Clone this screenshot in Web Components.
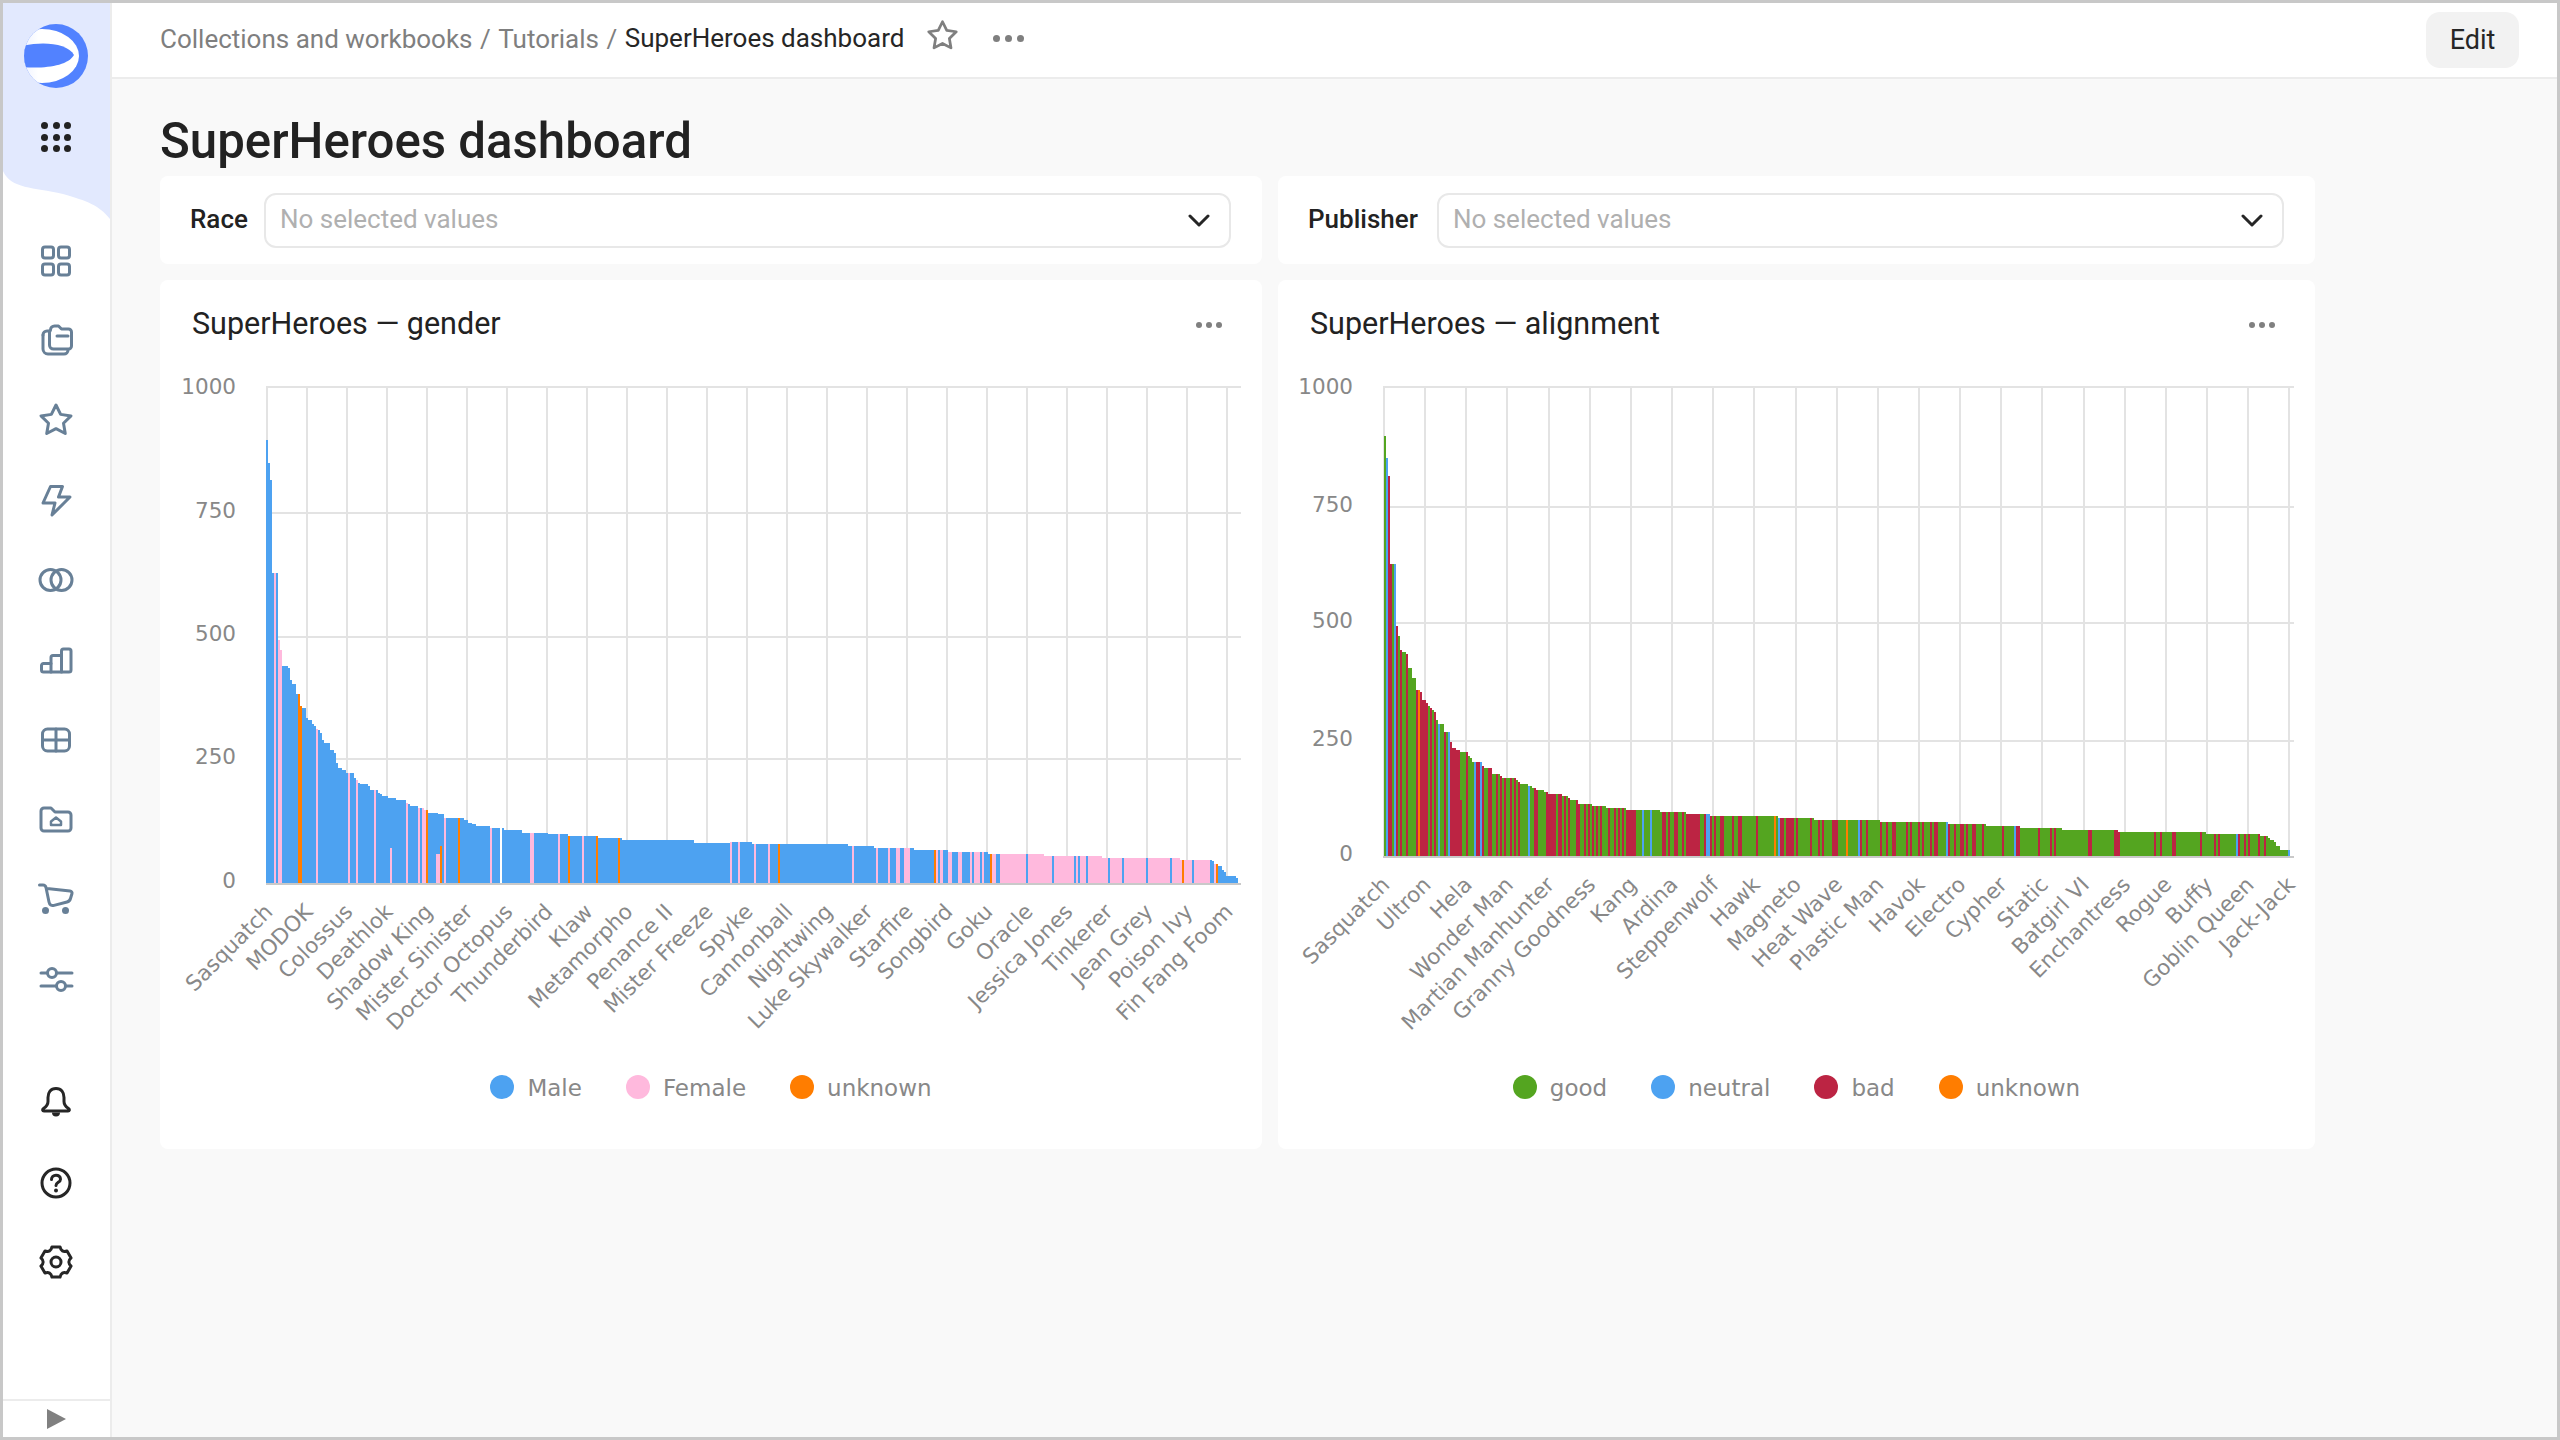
<!DOCTYPE html>
<html>
<head>
<meta charset="utf-8">
<title>SuperHeroes dashboard</title>
<style>
  html, body { margin: 0; padding: 0; background: #fff; }
  body { font-family: Roboto, "Liberation Sans", sans-serif; }
</style>
</head>
<body>
<ds-app></ds-app>
<script>
const BLUE = '#4da2f1', PINK = '#ffb9dd', ORANGE = '#ff7d00', GREEN = '#54a520', RED = '#bc2443';

// bar outlines and colour stripes traced from crops of the reference: ox/oy is the crop origin, sx/sy its scale
const CHARTS = {
  gender: {
    box: [160, 1102], left: 266, right: 1241, top: 387, axis: 883, step: 40, labelX: 236,
    grid: [513, 637, 759],
    ticks: [[1000, 394], [750, 518], [500, 641], [250, 764], [0, 888]],
    labels: ['Sasquatch', 'MODOK', 'Colossus', 'Deathlok', 'Shadow King', 'Mister Sinister', 'Doctor Octopus', 'Thunderbird', 'Klaw', 'Metamorpho', 'Penance II', 'Mister Freeze', 'Spyke', 'Cannonball', 'Nightwing', 'Luke Skywalker', 'Starfire', 'Songbird', 'Goku', 'Oracle', 'Jessica Jones', 'Tinkerer', 'Jean Grey', 'Poison Ivy', 'Fin Fang Foom'],
    legend: [['Male', BLUE], ['Female', PINK], ['unknown', ORANGE]],
    base: BLUE,
    steps: [
      { ox: 170, oy: 360, sx: 2.8, sy: 2.8, from: 270, pts: [[274,225],[280,287],[286,336],[302,595],[308,785],[314,813],[330,857],[336,863],[342,896],[353,908],[364,935],[370,969],[381,975],[386,1003],[398,1009],[403,1020],[409,1026],[414,1032],[420,1037],[426,1043],[431,1065],[448,1071],[459,1093],[465,1099],[470,1127],[481,1143],[492,1149],[515,1155],[521,1171],[526,1177],[532,1183],[554,1188],[560,1194],[582,1205],[588,1211],[594,1216],[610,1221],[633,1227],[661,1233],[666,1239],[672,1244],[694,1250],[711,1255],[722,1261],[750,1267],[767,1272],[823,1283],[834,1289],[845,1295],[857,1300],[896,1306],[936,1311],[986,1317],[1058,1323],[1114,1328],[1198,1334],[1266,1339],[1467,1345],[1568,1351]] },
      { ox: 720, oy: 700, sx: 2.8, sy: 3, pts: [[90,426],[358,432],[431,438],[543,444],[638,450],[750,456],[907,462],[1070,468],[1288,474],[1378,480],[1384,484],[1394,492],[1406,498],[1412,510],[1417,516],[1445,528],[1450,534]] }
    ],
    paint: [
      { ox: 170, sx: 2.8, color: PINK, runs: [[291,297],[302,314],[409,414],[498,504],[521,526],[571,577],[661,666],[694,700],[706,717],[767,773],[896,902],[1008,1019],[1086,1092],[1153,1159]] },
      { ox: 170, sx: 2.8, color: ORANGE, runs: [[358,369],[717,722],[806,812],[1114,1120],[1193,1198],[1254,1260]] },
      { ox: 170, sx: 2.8, color: '#fff', runs: [[925,930]] },
      { ox: 720, sx: 2.8, color: PINK, runs: [[28,34],[50,56],[95,100],[134,140],[370,376],[437,442],[470,476],[493,504],[515,532],[606,611],[617,623],[638,650],[666,678],[700,706],[711,727],[733,738],[762,773],[784,857],[862,930],[935,991],[996,1002],[1008,1025],[1030,1086],[1091,1126],[1131,1192],[1198,1260],[1265,1294],[1299,1322],[1327,1372],[1383,1388]] },
      { ox: 720, sx: 2.8, color: ORANGE, runs: [[162,167],[600,606],[756,762],[1294,1299],[1388,1394]] }
    ],
    stubs: [
      { x0: 390, x1: 392, y: 848, color: PINK },
      { x0: 436, x1: 440, y: 854, color: PINK },
      { x0: 440, x1: 442, y: 846, color: ORANGE }
    ]
  },
  alignment: {
    box: [1278, 1037], left: 1383, right: 2294, top: 387, axis: 856, step: 41.15, labelX: 1353,
    grid: [507, 623, 741],
    ticks: [[1000, 394], [750, 512], [500, 628], [250, 746], [0, 861]],
    labels: ['Sasquatch', 'Ultron', 'Hela', 'Wonder Man', 'Martian Manhunter', 'Granny Goodness', 'Kang', 'Ardina', 'Steppenwolf', 'Hawk', 'Magneto', 'Heat Wave', 'Plastic Man', 'Havok', 'Electro', 'Cypher', 'Static', 'Batgirl VI', 'Enchantress', 'Rogue', 'Buffy', 'Goblin Queen', 'Jack-Jack'],
    legend: [['good', GREEN], ['neutral', BLUE], ['bad', RED], ['unknown', ORANGE]],
    base: GREEN,
    steps: [
      { ox: 1280, oy: 360, sx: 3, sy: 2.8, from: 312, pts: [[318,213],[324,274],[330,325],[348,571],[354,745],[360,773],[366,812],[378,818],[384,823],[396,862],[408,890],[420,924],[426,930],[438,952],[444,960],[450,969],[456,975],[462,980],[468,986],[474,1008],[492,1019],[510,1042],[516,1070],[528,1086],[540,1092],[564,1098],[570,1109],[576,1115],[606,1126],[612,1137],[636,1142],[660,1159],[666,1165],[708,1170],[714,1176],[720,1182],[744,1187],[756,1193],[768,1198],[792,1204],[804,1210],[846,1215],[864,1221],[870,1227],[894,1232],[936,1243],[978,1249],[1038,1254],[1140,1260],[1218,1266],[1290,1271],[1494,1277]] },
      { ox: 1760, oy: 700, sx: 2.8, sy: 3, pts: [[50,348],[150,354],[336,360],[526,366],[632,372],[728,378],[846,384],[1002,390],[1248,396],[1400,402],[1422,408],[1428,414],[1440,420],[1445,426],[1456,438],[1484,450]] }
    ],
    paint: [
      { ox: 1280, sx: 3, color: RED, runs: [[324,336],[348,354],[360,366],[378,384],[408,414],[420,444],[450,456],[462,468],[492,498],[510,540],[558,564],[588,600],[606,612],[624,636],[648,654],[660,666],[672,678],[690,696],[702,708],[714,720],[762,774],[798,828],[834,846],[852,858],[864,870],[888,900],[912,918],[924,930],[936,942],[948,954],[960,966],[984,990],[1002,1008],[1014,1020],[1026,1032],[1038,1068],[1146,1158],[1164,1170],[1182,1194],[1206,1212],[1218,1260],[1272,1278],[1290,1296],[1302,1308],[1320,1332],[1356,1362],[1374,1386],[1428,1434]] },
      { ox: 1280, sx: 3, color: BLUE, runs: [[318,324],[342,348],[474,480],[504,510],[582,588],[600,606],[744,750],[1086,1092],[1110,1116],[1278,1290],[1494,1500]] },
      { ox: 1280, sx: 3, color: ORANGE, runs: [[414,420],[1482,1488]] },
      { ox: 1760, sx: 2.8, color: RED, runs: [[56,68],[73,96],[100,106],[140,146],[162,168],[174,180],[202,218],[280,286],[297,302],[336,342],[353,358],[370,381],[409,414],[420,426],[442,448],[454,459],[476,482],[487,498],[526,532],[543,549],[560,571],[577,582],[594,605],[622,627],[678,683],[717,728],[778,784],[812,818],[823,829],[918,930],[991,1008],[1103,1109],[1120,1126],[1154,1165],[1232,1238],[1271,1277],[1282,1288],[1338,1344],[1355,1361],[1366,1372],[1394,1400],[1411,1417]] },
      { ox: 1760, sx: 2.8, color: BLUE, runs: [[50,56],[274,280],[521,526],[711,717],[1333,1338],[1478,1484]] },
      { ox: 1760, sx: 2.8, color: ORANGE, runs: [[40,46],[241,246]] }
    ],
    stubs: [{ x0: 1460, x1: 1462, y: 800, color: RED }]
  }
};

function gearPath() {
  const pt = (deg, r) => {
    const a = deg * Math.PI / 180;
    return (18 + r * Math.cos(a)).toFixed(2) + ' ' + (18 + r * Math.sin(a)).toFixed(2);
  };
  let d = '';
  for (let i = 0; i < 6; i++) {
    const a = -90 + i * 60;
    d += (i ? 'L' : 'M') + pt(a - 15, 15.6) + 'L' + pt(a + 15, 15.6) + 'Q' + pt(a + 30, 10.6) + ' ' + pt(a + 45, 15.6);
  }
  return d + 'Z';
}

const ICONS = {
  dashboards: '<rect x="4.5" y="4" width="11" height="11" rx="2.5"/><rect x="20.5" y="4" width="11" height="11" rx="2.5"/><rect x="4.5" y="21" width="11" height="11" rx="2.5"/><rect x="20.5" y="21" width="11" height="11" rx="2.5"/>',
  collections: '<g transform="translate(0 -2)"><path d="M12.500 9a4 4 0 0 1 4-4h4l3 3h7a3 3 0 0 1 3 3v14a3 3 0 0 1-3 3h-15a4 4 0 0 1-4-4V11z"/><path d="M19 15h11"/><path d="M5 14v14a5 5 0 0 0 5 5h16a4 4 0 0 0 4-4"/><path d="M5 14a4 4 0 0 1 4-4h2"/></g>',
  star: '<path transform="scale(1.5)" stroke-width="2" d="M12 2l3.09 6.26L22 9.27l-5 4.87 1.18 6.88L12 17.77l-6.18 3.25L7 14.14 2 9.27l6.91-1.01z"/>',
  bolt: '<path d="M12.5 4.5H24.5L20.5 15H32L14 33 17 21H5z"/>',
  sets: '<ellipse cx="12.5" cy="18" rx="10.5" ry="10.5"/><ellipse cx="23.5" cy="18" rx="10.5" ry="10.5"/>',
  bars: '<path d="M5.5 21.5H13V15.5a2 2 0 0 1 2-2H23.5V9a2 2 0 0 1 2-2H31a2 2 0 0 1 2 2V28a2 2 0 0 1-2 2H5.5a2 2 0 0 1-2-2v-4.5a2 2 0 0 1 2-2z"/><path d="M13 21.5V30M23.5 13.5V30"/>',
  table: '<rect x="4.5" y="7" width="27" height="22" rx="5"/><path d="M18 7V29M4.5 18H31.5"/>',
  folder: '<path d="M3 10a3 3 0 0 1 3-3h7l4 4h13a3 3 0 0 1 3 3v13a3 3 0 0 1-3 3H6a3 3 0 0 1-3-3z"/><path stroke-width="2.5" d="M13 24v-3.500l5-4 5 4V24z"/>',
  cart: '<path d="M1.500 4H5c1.500 0 2.600 1 3 2.500L11 21c.6 3 2.500 4 5 3.400L29 21c2-.5 3-1.700 3.500-3.500L34 12.500c.3-1.300-.5-2.300-2-2.500L9 7.500"/><circle cx="7.500" cy="29.500" r="3.500" fill="currentColor" stroke="none"/><circle cx="27.500" cy="29.500" r="3.500" fill="currentColor" stroke="none"/>',
  sliders: '<path d="M3 12H34M3 25H34"/><circle cx="14" cy="12" r="4.500" fill="#fff"/><circle cx="23" cy="25" r="4.500" fill="#fff"/>',
  bell: '<path d="M18 3.500c-5.500 0-8 4-8 9v4c0 3-1.500 5-4.500 7-1.500 1-1 2.500.5 2.500h24c1.500 0 2-1.500.5-2.500-3-2-4.500-4-4.500-7v-4c0-5-2.500-9-8-9z"/><path fill="currentColor" stroke="none" d="M14 27.500h8a4 4 0 0 1-8 0z"/>',
  help: '<circle cx="18" cy="18" r="14"/><path d="M13.500 14.500c0-2.700 2-4.300 4.500-4.300s4.500 1.500 4.500 4c0 3.200-4.500 3.100-4.500 6.300"/><circle cx="18" cy="25.500" r="2" fill="currentColor" stroke="none"/>',
  gear: '<path d="' + gearPath() + '"/><circle cx="18" cy="18" r="5"/>'
};

class DsIcon extends HTMLElement {
  connectedCallback() {
    const size = this.getAttribute('size') || 36;
    const shadow = this.attachShadow({ mode: 'open' });
    shadow.innerHTML = `
      <style>
        :host { display: block; width: ${size}px; height: ${size}px; }
        svg { display: block; width: 100%; height: 100%; fill: none; stroke: currentColor; stroke-width: 3; stroke-linecap: round; stroke-linejoin: round; }
      </style>
      <svg viewBox="0 0 36 36">${ICONS[this.getAttribute('name')]}</svg>`;
  }
}

class DsSidebar extends HTMLElement {
  constructor() {
    super();
    const nav = ['dashboards', 'collections', 'star', 'bolt', 'sets', 'bars', 'table', 'folder', 'cart', 'sliders'];
    const bottom = ['bell', 'help', 'gear'];
    const item = name => `<div class="item"><ds-icon name="${name}"></ds-icon></div>`;
    const dots = Array.from({ length: 9 }, () => '<i></i>').join('');
    this.attachShadow({ mode: 'open' }).innerHTML = `
      <style>
        :host { display: flex; flex-direction: column; flex: none; width: 109px; box-sizing: border-box; border-right: 2px solid #ececec; background: #fff; position: relative; }
        .curve { position: absolute; left: 0; top: 0; width: 107px; height: 216px; }
        .top { position: relative; height: 218px; display: flex; flex-direction: column; align-items: center; box-sizing: border-box; padding-top: 21px; padding-right: 1px; }
        .logo { display: block; width: 64px; height: 64px; }
        .apps { display: grid; grid-template-columns: repeat(3, 7px); gap: 4.500px; margin-top: 34px; }
        .apps i { width: 7px; height: 7px; border-radius: 50%; background: #222; }
        .item { height: 79.800px; display: flex; align-items: center; justify-content: center; padding-right: 1px; }
        .nav { color: #688097; }
        .low { color: #262626; margin-top: 44px; }
        .collapse { margin-top: auto; height: 36px; border-top: 2px solid #ececec; display: flex; align-items: center; justify-content: center; padding-right: 2px; }
        .collapse svg { width: 20px; height: 20px; fill: #808080; }
      </style>
      <svg class="curve" viewBox="0 0 107 216" preserveAspectRatio="none"><path fill="#e2e9fe" d="M0 0H107V216C96 202 84 198 60 191 30 184 8 186 0 168Z"/></svg>
      <div class="top">
        <svg class="logo" viewBox="0 0 64 64">
          <defs>
            <clipPath id="lc"><circle cx="32" cy="32" r="32"/></clipPath>
            <linearGradient id="lg" x1="0" x2="1" y1="0" y2="0"><stop offset="0" stop-color="#dbe4ff"/><stop offset=".45" stop-color="#fff"/></linearGradient>
          </defs>
          <circle cx="32" cy="32" r="32" fill="#5282ff"/>
          <g clip-path="url(#lc)">
            <ellipse cx="18" cy="32" rx="37" ry="27" fill="url(#lg)"/>
            <path fill="#5282ff" d="M-2 22C18 17 44 19 50 31 44 42 20 45-2 43Z"/>
          </g>
        </svg>
        <div class="apps">${dots}</div>
      </div>
      <div class="nav">${nav.map(item).join('')}</div>
      <div class="low">${bottom.map(item).join('')}</div>
      <div class="collapse"><svg viewBox="0 0 20 20"><path d="M1 0L20 10 1 20z"/></svg></div>`;
  }
}

class DsHeader extends HTMLElement {
  constructor() {
    super();
    this.attachShadow({ mode: 'open' }).innerHTML = `
      <style>
        :host { display: flex; align-items: center; flex: none; height: 76px; box-sizing: border-box; border-bottom: 2px solid #ececec; padding: 0 38px 0 48px; background: #fff; font-size: 26px; color: #7f7f7f; }
        .crumbs { display: flex; align-items: center; gap: 7.500px; white-space: nowrap; padding-bottom: 2px; }
        .current { color: #262626; padding-bottom: 2px; }
        .star { margin: 0 0 10px 22px; color: #7f7f7f; }
        .dots { display: flex; gap: 5px; margin: 0 0 4px 34px; }
        .dots i { width: 7px; height: 7px; border-radius: 50%; background: #7f7f7f; }
        .edit { margin-left: auto; width: 93px; height: 56px; border-radius: 14px; background: #f2f2f2; color: #262626; display: flex; align-items: center; justify-content: center; font-size: 27px; }
      </style>
      <div class="crumbs"><span>Collections and workbooks</span><span>/</span><span>Tutorials</span><span>/</span><span class="current">SuperHeroes dashboard</span></div>
      <ds-icon class="star" name="star" size="33"></ds-icon>
      <div class="dots"><i></i><i></i><i></i></div>
      <div class="edit">Edit</div>`;
  }
}

class DsFilter extends HTMLElement {
  constructor() {
    super();
    this.attachShadow({ mode: 'open' }).innerHTML = `
      <style>
        :host { display: flex; align-items: center; height: 88px; box-sizing: border-box; padding: 0 31px 0 30px; background: #fff; border-radius: 8px; }
        .label { font-size: 26px; font-weight: 500; color: #222; margin-right: var(--label-gap, 19px); padding-bottom: 3px; }
        .select { flex: 1; height: 55px; box-sizing: border-box; border: 2px solid #e8e8e8; border-radius: 12px; display: flex; align-items: center; justify-content: space-between; padding: 0 19px 3px 14px; font-size: 26px; color: #b0b0b0; }
        svg { width: 22px; height: 14px; margin-top: 5px; fill: none; stroke: #262626; stroke-width: 3; stroke-linecap: round; stroke-linejoin: round; }
      </style>
      <span class="label"><slot></slot></span>
      <div class="select"><span>No selected values</span><svg viewBox="0 0 22 14"><path d="M2 2l9 9 9-9"/></svg></div>`;
  }
}

class DsChart extends HTMLElement {
  connectedCallback() {
    const cfg = CHARTS[this.getAttribute('chart')];
    const legend = cfg.legend.map(([name, color]) => `<span class="entry"><i style="background:${color}"></i><span>${name}</span></span>`).join('');
    this.attachShadow({ mode: 'open' }).innerHTML = `
      <style>
        :host { display: block; height: 869px; background: #fff; border-radius: 8px; }
        .head { display: flex; align-items: center; justify-content: space-between; height: 70px; padding: 17px 40px 0 32px; box-sizing: border-box; font-size: 30.500px; color: #222; }
        .more { display: flex; gap: 4px; padding-top: 3px; }
        .more i { width: 6px; height: 6px; border-radius: 50%; background: #808080; }
        svg { display: block; font: 21.500px "DejaVu Sans", sans-serif; }
        text { fill: #888; }
        .legend { display: flex; justify-content: center; gap: 44px; margin-top: 24px; font: 23px/24px "DejaVu Sans", sans-serif; color: #888; }
        .entry { display: flex; align-items: center; gap: 13px; }
        .entry span { padding-top: 2px; }
        .entry i { width: 24px; height: 24px; border-radius: 50%; }
      </style>
      <div class="head"><span>${this.getAttribute('heading')}</span><div class="more"><i></i><i></i><i></i></div></div>
      <svg width="${cfg.box[1]}" height="700" viewBox="${cfg.box[0]} 350 ${cfg.box[1]} 700">${this.plot(cfg)}</svg>
      <div class="legend">${legend}</div>`;
  }

  // every pixel column gets a top and a colour, runs of equal columns become one rect
  plot(cfg) {
    const top = {}, color = {};
    for (const s of cfg.steps) {
      let prev = s.from;
      for (const [xz, yz] of s.pts) {
        const x0 = prev === undefined ? null : Math.round(s.ox + prev / s.sx);
        const x1 = Math.round(s.ox + xz / s.sx);
        const start = x0 === null ? Math.max(...Object.keys(top).map(Number)) + 1 : x0;
        for (let x = start; x < x1; x++) { top[x] = s.oy + yz / s.sy; color[x] = cfg.base; }
        prev = xz;
      }
    }
    for (const p of cfg.paint) {
      for (const [a, b] of p.runs) {
        for (let x = Math.round(p.ox + a / p.sx); x < Math.round(p.ox + b / p.sx); x++) color[x] = p.color;
      }
    }
    let rects = '';
    const xs = Object.keys(top).map(Number).sort((a, b) => a - b);
    let i = 0;
    while (i < xs.length) {
      let j = i;
      while (j + 1 < xs.length && top[xs[j + 1]] === top[xs[i]] && color[xs[j + 1]] === color[xs[i]]) j++;
      const y = Math.round(top[xs[i]]);
      rects += `<rect x="${xs[i]}" y="${y}" width="${xs[j] - xs[i] + 1}" height="${cfg.axis - y}" fill="${color[xs[i]]}"/>`;
      i = j + 1;
    }
    for (const s of cfg.stubs) {
      rects += `<rect x="${s.x0}" y="${s.y}" width="${s.x1 - s.x0}" height="${cfg.axis - s.y}" fill="${s.color}"/>`;
    }
    let grid = '';
    cfg.labels.forEach((_, k) => {
      const x = Math.round(cfg.left + k * cfg.step);
      grid += `<rect x="${x}" y="${cfg.top}" width="2" height="${cfg.axis - cfg.top}" fill="#e3e3e3"/>`;
    });
    for (const y of [cfg.top, ...cfg.grid]) {
      grid += `<rect x="${cfg.left}" y="${y - 1}" width="${cfg.right - cfg.left}" height="2" fill="#e3e3e3"/>`;
    }
    const axis = `<rect x="${cfg.left}" y="${cfg.axis}" width="${cfg.right - cfg.left}" height="2" fill="#c9c9c9"/>`;
    const yLabels = cfg.ticks.map(([v, y]) => `<text x="${cfg.labelX}" y="${y}" text-anchor="end">${v}</text>`).join('');
    const xLabels = cfg.labels.map((name, k) => {
      const x = cfg.left + k * cfg.step + 8, y = cfg.axis + 30;
      return `<text x="${x}" y="${y}" text-anchor="end" transform="rotate(-45 ${x} ${y})">${name}</text>`;
    }).join('');
    return `<g shape-rendering="crispEdges">${grid}${rects}${axis}</g>${yLabels}${xLabels}`;
  }
}

class DsApp extends HTMLElement {
  constructor() {
    super();
    this.attachShadow({ mode: 'open' }).innerHTML = `
      <style>
        :host { display: flex; width: 2560px; height: 1440px; box-sizing: border-box; border: 3px solid #c8c8c8; background: #f9f9f9; overflow: hidden; font-family: Roboto, "Liberation Sans", sans-serif; }
        main { flex: 1; display: flex; flex-direction: column; min-width: 0; }
        .content { padding: 0 0 0 48px; }
        h1 { margin: 0; height: 97px; box-sizing: border-box; padding-top: 34px; font-size: 49.200px; line-height: 56px; font-weight: 500; color: #222; }
        .grid { display: grid; grid-template-columns: 1102px 1037px; gap: 16px; }
        .race { --label-gap: 16px; }
      </style>
      <ds-sidebar></ds-sidebar>
      <main>
        <ds-header></ds-header>
        <div class="content">
          <h1>SuperHeroes dashboard</h1>
          <div class="grid">
            <ds-filter class="race">Race</ds-filter>
            <ds-filter>Publisher</ds-filter>
            <ds-chart chart="gender" heading="SuperHeroes — gender"></ds-chart>
            <ds-chart chart="alignment" heading="SuperHeroes — alignment"></ds-chart>
          </div>
        </div>
      </main>`;
  }
}

customElements.define('ds-icon', DsIcon);
customElements.define('ds-sidebar', DsSidebar);
customElements.define('ds-header', DsHeader);
customElements.define('ds-filter', DsFilter);
customElements.define('ds-chart', DsChart);
customElements.define('ds-app', DsApp);
</script>
</body>
</html>
